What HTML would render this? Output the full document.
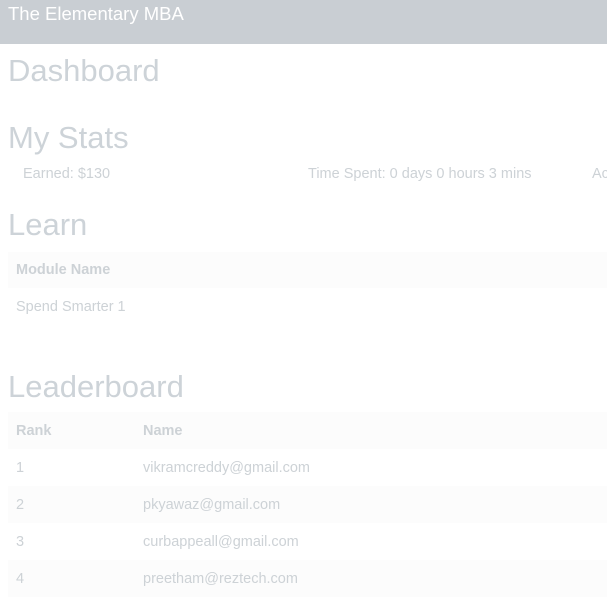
<!DOCTYPE html>
<html><head><style>
body{margin:0;width:607px;height:607px;overflow:hidden;background:#fff;font-family:"Liberation Sans",sans-serif;color:#cdd2d6;position:relative}
.a{position:absolute;white-space:nowrap;line-height:1}
.hdr{position:absolute;left:0;top:0;width:607px;height:44px;background:#c9ced3}
h1{font-weight:normal;margin:0;font-size:31px;color:#cdd3d8}
.sm{font-size:14.5px}
.b{font-weight:bold}
.row{position:absolute;left:8px;width:599px;height:37px;background:#fcfcfc}
</style></head><body>
<div class="hdr"></div>
<div class="a" style="left:8px;top:5px;font-size:18.5px;color:#fff">The Elementary MBA</div>
<h1 class="a" style="left:8px;top:55px">Dashboard</h1>
<h1 class="a" style="left:8px;top:122px">My Stats</h1>
<div class="a sm" style="left:23px;top:167px">Earned: $130</div>
<div class="a sm" style="left:308px;top:167px">Time Spent: 0 days 0 hours 3 mins</div>
<div class="a sm" style="left:592px;top:167px">Ac</div>
<h1 class="a" style="left:8px;top:209px">Learn</h1>
<div class="row" style="top:252px;height:36px"></div>
<div class="a sm b" style="left:16px;top:263px">Module Name</div>
<div class="a sm" style="left:16px;top:300px">Spend Smarter 1</div>
<h1 class="a" style="left:8px;top:371px">Leaderboard</h1>
<div class="row" style="top:412px"></div>
<div class="row" style="top:486px"></div>
<div class="row" style="top:560px"></div>
<div class="a sm b" style="left:16px;top:424px">Rank</div>
<div class="a sm b" style="left:143px;top:424px">Name</div>
<div class="a sm" style="left:16px;top:461px">1</div>
<div class="a sm" style="left:143px;top:461px">vikramcreddy@gmail.com</div>
<div class="a sm" style="left:16px;top:498px">2</div>
<div class="a sm" style="left:143px;top:498px">pkyawaz@gmail.com</div>
<div class="a sm" style="left:16px;top:535px">3</div>
<div class="a sm" style="left:143px;top:535px">curbappeall@gmail.com</div>
<div class="a sm" style="left:16px;top:572px">4</div>
<div class="a sm" style="left:143px;top:572px">preetham@reztech.com</div>
</body></html>
